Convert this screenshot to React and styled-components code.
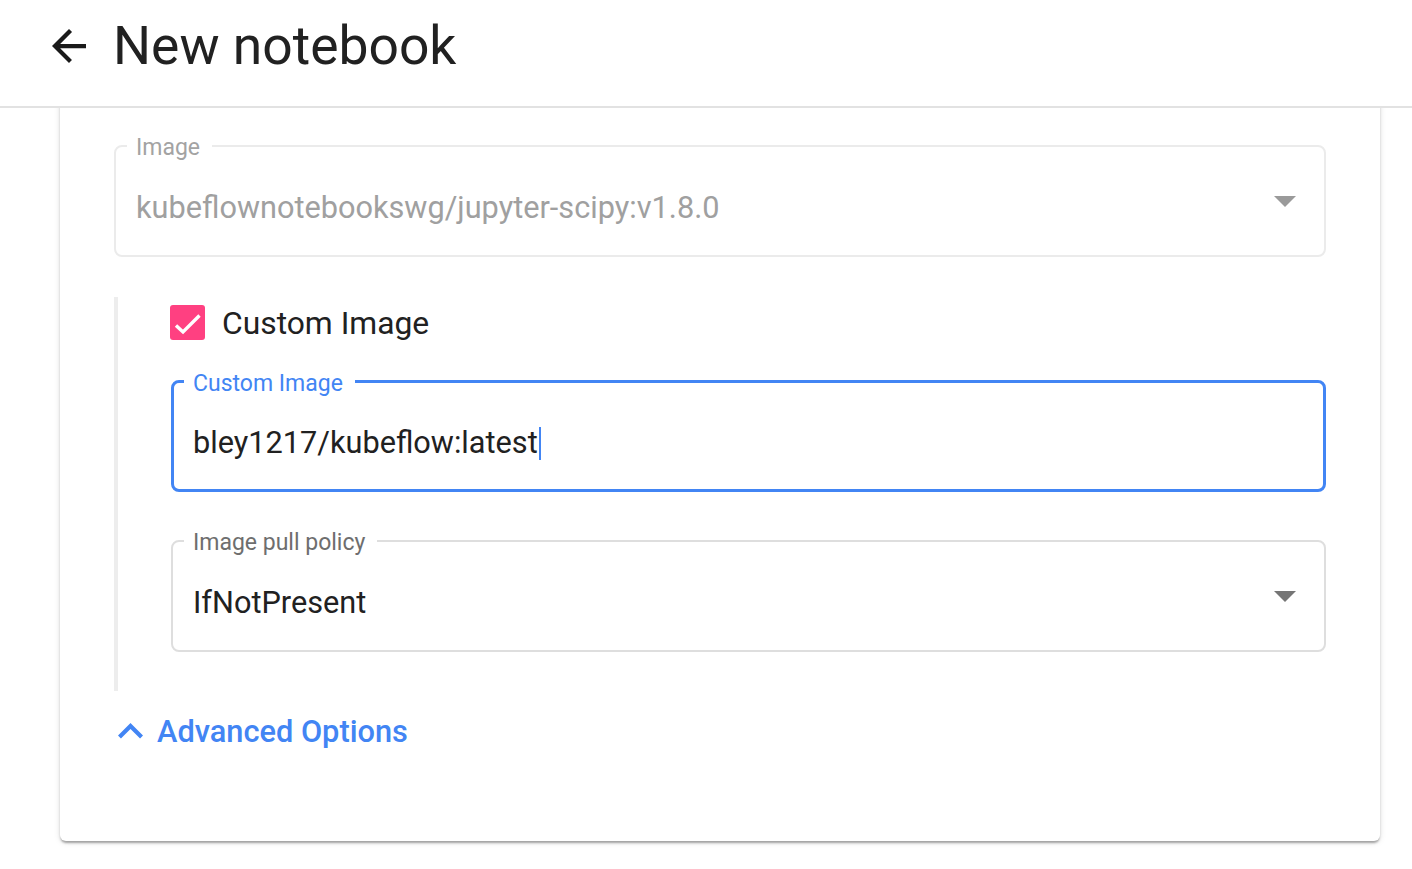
import React from "react";
import styled, { createGlobalStyle } from "styled-components";

const Global = createGlobalStyle`
  html, body { margin: 0; padding: 0; background: #ffffff; }
  body { font-family: Roboto, "Noto Sans", "Liberation Sans", sans-serif; overflow: hidden; }
  * { box-sizing: border-box; }
`;

const Page = styled.div`
  width: 1412px;
  height: 869px;
  display: flex;
  flex-direction: column;
  background: #ffffff;
`;

const Header = styled.header`
  height: 108px;
  flex: none;
  display: flex;
  align-items: center;
  padding: 0 0 14px 52px;
  border-bottom: 2px solid #e2e2e2;
  background: #ffffff;
  position: relative;
  z-index: 2;
`;

const BackButton = styled.button`
  border: none;
  background: none;
  padding: 0;
  margin: 0;
  width: 34px;
  height: 34px;
  display: flex;
  cursor: pointer;
  color: #1a1a1a;
`;

const Title = styled.h1`
  margin: 0 0 2px 27px;
  font-size: 53.4px;
  font-weight: 400;
  color: #212121;
  letter-spacing: 0;
`;

const Main = styled.main`
  flex: 1;
  min-height: 0;
  overflow: hidden;
  display: flex;
  flex-direction: column;
  justify-content: flex-end;
  padding: 0 32px 28px 60px;
`;

const Card = styled.section`
  flex: none;
  background: #ffffff;
  border-radius: 6px;
  box-shadow: 0 3px 2px -1px rgba(0, 0, 0, 0.22), 0 2px 3px 0 rgba(0, 0, 0, 0.14),
    0 1px 7px 0 rgba(0, 0, 0, 0.1);
  padding: 60px 54px 90px 54px;
  display: flex;
  flex-direction: column;
`;

const Field = styled.div`
  position: relative;
  height: 112px;
  flex: none;
  border: ${(p) => p.$width}px solid ${(p) => p.$color};
  border-radius: 8px;
  display: flex;
  align-items: center;
  padding: 0 28px 0 ${(p) => 22 - p.$width}px;
  margin-bottom: ${(p) => p.$gap || 0}px;
`;

const FloatLabel = styled.span`
  position: absolute;
  top: ${(p) => -p.$width / 2 - 10}px;
  left: ${(p) => 22 - p.$width - 9}px;
  padding: 0 12px 0 9px;
  background: #ffffff;
  font-size: 23px;
  line-height: 24px;
  color: ${(p) => p.$color};
  white-space: nowrap;
`;

const Value = styled.div`
  flex: 1;
  margin-top: 14px;
  font-size: 30.7px;
  line-height: 36px;
  color: ${(p) => p.$color};
  white-space: nowrap;
  display: flex;
  align-items: center;
`;

const Caret = styled.span`
  display: inline-block;
  width: 2px;
  height: 33px;
  margin-left: 1px;
  background: #4285f4;
`;

const Arrow = styled.span`
  flex: none;
  width: 0;
  height: 0;
  border-left: 11px solid transparent;
  border-right: 11px solid transparent;
  border-top: 11px solid ${(p) => p.$color};
`;

const Section = styled.div`
  flex: none;
  border-left: 4px solid #ededed;
  padding: 8px 0 39px 53px;
  margin-bottom: 20px;
  display: flex;
  flex-direction: column;
`;

const CheckRow = styled.label`
  height: 35px;
  display: flex;
  align-items: center;
  gap: 17px;
  margin: 0 0 40px -1px;
  font-size: 31.8px;
  color: #212121;
  cursor: pointer;
`;

const CheckBox = styled.span`
  width: 35px;
  height: 35px;
  flex: none;
  border-radius: 3px;
  background: #ff4081;
  display: flex;
`;

const Toggle = styled.button`
  align-self: flex-start;
  height: 40px;
  display: flex;
  align-items: center;
  gap: 14px;
  padding: 0 0 0 4px;
  margin: 0;
  border: none;
  background: none;
  color: #4285f4;
  font-family: Roboto, "Noto Sans", "Liberation Sans", sans-serif;
  font-size: 30.75px;
  font-weight: 500;
  cursor: pointer;
`;

function OutlinedField({ label, labelColor, value, valueColor, width, color, gap, select, caret }) {
  return (
    <Field $width={width} $color={color} $gap={gap}>
      <FloatLabel $width={width} $color={labelColor}>{label}</FloatLabel>
      <Value $color={valueColor}>
        {value}
        {caret && <Caret />}
      </Value>
      {select && <Arrow $color={select} />}
    </Field>
  );
}

export default function App() {
  return (
    <Page>
      <Global />
      <Header>
        <BackButton aria-label="Back">
          <svg width="34" height="34" viewBox="4 4 16 16" fill="currentColor">
            <path d="M20 11H7.83l5.59-5.59L12 4l-8 8 8 8 1.41-1.41L7.83 13H20v-2z" />
          </svg>
        </BackButton>
        <Title>New notebook</Title>
      </Header>
      <Main>
        <Card>
          <OutlinedField
            label="Image"
            labelColor="#a3a3a3"
            value="kubeflownotebookswg/jupyter-scipy:v1.8.0"
            valueColor="#a0a0a0"
            width={2}
            color="#ebebeb"
            gap={40}
            select="#9a9a9a"
          />
          <Section>
            <CheckRow>
              <CheckBox>
                <svg width="35" height="35" viewBox="0 0 35 35">
                  <path d="M6 20.5 L13 27 L29.5 10.5" fill="none" stroke="#ffffff" strokeWidth="3.4" />
                </svg>
              </CheckBox>
              Custom Image
            </CheckRow>
            <OutlinedField
              label="Custom Image"
              labelColor="#4285f4"
              value="bley1217/kubeflow:latest"
              valueColor="#212121"
              width={3}
              color="#4285f4"
              gap={48}
              caret
            />
            <OutlinedField
              label="Image pull policy"
              labelColor="#6e6e6e"
              value="IfNotPresent"
              valueColor="#212121"
              width={2}
              color="#dedede"
              select="#757575"
            />
          </Section>
          <Toggle>
            <svg width="25" height="18" viewBox="6 7.6 12 8.4" fill="currentColor">
              <path d="M12 8l-6 6 1.41 1.41L12 10.83l4.59 4.58L18 14z" />
            </svg>
            Advanced Options
          </Toggle>
        </Card>
      </Main>
    </Page>
  );
}
